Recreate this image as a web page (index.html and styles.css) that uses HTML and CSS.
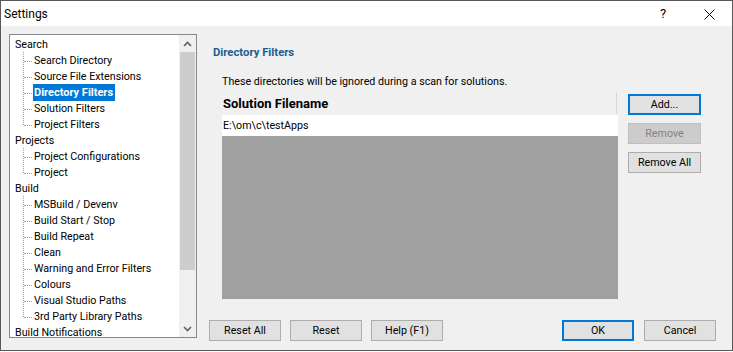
FILE: index.html
```html
<!DOCTYPE html>
<html lang="en">
<head>
    <meta charset="UTF-8">
    <title>Settings</title>
    <link rel="stylesheet" href="styles.css">
</head>
<body>
    <div class="window">
        <div class="titlebar">
            <span class="title">Settings</span>
            <span class="help-btn">?</span>
            <span class="close-btn">
                <svg width="11" height="11" viewBox="0 0 11 11"><path d="M0.5 0.5 L10.5 10.5 M10.5 0.5 L0.5 10.5" stroke="#000" stroke-width="1" fill="none"/></svg>
            </span>
        </div>
        <div class="client">
            <div class="tree">
                <div class="tree-list">
                    <div class="node">Search</div>
                    <div class="child">Search Directory</div>
                    <div class="child">Source File Extensions</div>
                    <div class="child"><span class="selected">Directory Filters</span></div>
                    <div class="child">Solution Filters</div>
                    <div class="child last">Project Filters</div>
                    <div class="node">Projects</div>
                    <div class="child">Project Configurations</div>
                    <div class="child last">Project</div>
                    <div class="node">Build</div>
                    <div class="child">MSBuild / Devenv</div>
                    <div class="child">Build Start / Stop</div>
                    <div class="child">Build Repeat</div>
                    <div class="child">Clean</div>
                    <div class="child">Warning and Error Filters</div>
                    <div class="child">Colours</div>
                    <div class="child">Visual Studio Paths</div>
                    <div class="child last">3rd Party Library Paths</div>
                    <div class="node">Build Notifications</div>
                </div>
                <div class="scrollbar">
                    <div class="arrow">
                        <svg width="9" height="6" viewBox="0 0 9 6"><path d="M1 5 L4.5 1.5 L8 5" stroke="#606060" stroke-width="1.6" fill="none"/></svg>
                    </div>
                    <div class="thumb"></div>
                    <div class="track"></div>
                    <div class="arrow">
                        <svg width="9" height="6" viewBox="0 0 9 6"><path d="M1 1 L4.5 4.5 L8 1" stroke="#606060" stroke-width="1.6" fill="none"/></svg>
                    </div>
                </div>
            </div>

            <div class="panel">
                <div class="page-title">Directory Filters</div>
                <div class="desc">These directories will be ignored during a scan for solutions.</div>
                <div class="list-area">
                    <div class="list">
                        <div class="list-header"><div class="col">Solution Filename</div></div>
                        <div class="list-row">E:\om\c\testApps</div>
                        <div class="list-empty"></div>
                    </div>
                    <div class="side-buttons">
                        <button class="btn default">Add...</button>
                        <button class="btn" disabled>Remove</button>
                        <button class="btn">Remove All</button>
                    </div>
                </div>
                <div class="footer">
                    <button class="btn">Reset All</button>
                    <button class="btn">Reset</button>
                    <button class="btn">Help (F1)</button>
                    <div class="spacer"></div>
                    <button class="btn default">OK</button>
                    <button class="btn">Cancel</button>
                </div>
            </div>
        </div>
    </div>
</body>
</html>
```
FILE: styles.css
```css
body {
    margin: 0;
    background: #fff;
    font-family: Roboto, "Noto Sans", sans-serif;
    font-size: 10.7px;
    color: #000;
}
.window {
    width: 733px;
    height: 351px;
    box-sizing: border-box;
    border: 1px solid #595959;
    display: flex;
    flex-direction: column;
}
.titlebar {
    height: 25px;
    background: #fff;
    display: flex;
    align-items: center;
    font-size: 12px;
}
.title {
    padding-left: 3px;
    flex: 1;
}
.help-btn {
    width: 14px;
    margin-right: 30px;
    font-size: 13px;
}
.close-btn {
    display: flex;
    margin-right: 17px;
    padding-top: 1px;
}
.client {
    flex: 1;
    background: #f0f0f0;
    display: flex;
    padding: 8px 16px 0 8px;
}

/* tree */
.tree {
    width: 188px;
    height: 304px;
    box-sizing: border-box;
    border: 1px solid #828790;
    background: #fff;
    display: flex;
}
.tree-list {
    flex: 1;
    overflow: hidden;
    padding-top: 2px;
    white-space: nowrap;
}
.node, .child {
    height: 16px;
    line-height: 16px;
}
.node {
    padding-left: 5px;
}
.child {
    position: relative;
    padding-left: 24px;
}
.child::before {
    content: "";
    position: absolute;
    left: 13px;
    top: -1px;
    bottom: 0;
    border-left: 1px dotted #a0a0a0;
}
.child.last::before {
    bottom: 8px;
}
.child::after {
    content: "";
    position: absolute;
    left: 14px;
    top: 8px;
    width: 8px;
    border-top: 1px dotted #a0a0a0;
}
.selected {
    display: inline-block;
    margin-left: -1px;
    margin-top: -1px;
    padding: 1px 2px 0 1px;
    background: #0078d7;
    color: #fff;
    font-weight: bold;
    font-size: 11px;
    height: 16px;
}
.scrollbar {
    width: 17px;
    background: #f0f0f0;
    display: flex;
    flex-direction: column;
}
.arrow {
    height: 17px;
    display: flex;
    align-items: center;
    justify-content: center;
}
.thumb {
    height: 218px;
    margin: 0 1px;
    background: #cdcdcd;
}
.track {
    flex: 1;
}

/* right panel */
.panel {
    flex: 1;
    margin-left: 12px;
    display: flex;
    flex-direction: column;
}
.page-title {
    margin-top: 11px;
    padding-left: 4px;
    line-height: 16px;
    font-weight: bold;
    font-size: 11.3px;
    color: #1a5e90;
}
.desc {
    margin-top: 13px;
    padding-left: 13px;
    line-height: 16px;
}
.list-area {
    display: flex;
    margin-top: 3px;
    padding-left: 13px;
}
.list {
    width: 396px;
    height: 206px;
    display: flex;
    flex-direction: column;
}
.list-header {
    height: 22px;
}
.col {
    width: 393px;
    height: 21px;
    line-height: 21px;
    padding-left: 1px;
    border-right: 1px solid #d5d5d5;
    font-weight: bold;
    font-size: 13px;
}
.list-row {
    height: 21px;
    line-height: 21px;
    padding-left: 1px;
    background: #fff;
}
.list-empty {
    flex: 1;
    background: #a0a0a0;
}
.side-buttons {
    margin-left: 10px;
    padding-top: 1px;
    display: flex;
    flex-direction: column;
    gap: 8px;
}
.side-buttons .btn {
    width: 73px;
}
.btn {
    width: 72px;
    height: 21px;
    box-sizing: border-box;
    padding: 0;
    border: 1px solid #adadad;
    background: #e1e1e1;
    font-family: inherit;
    font-size: 10.7px;
    color: #000;
}
.btn.default {
    border: 2px solid #0078d7;
}
.btn:disabled {
    background: #cccccc;
    border-color: #bfbfbf;
    color: #838383;
}
.footer {
    margin-top: auto;
    margin-bottom: 9px;
    display: flex;
    gap: 9px;
}
.spacer {
    flex: 1;
}
.footer .default {
    margin-right: 1px;
}
```
